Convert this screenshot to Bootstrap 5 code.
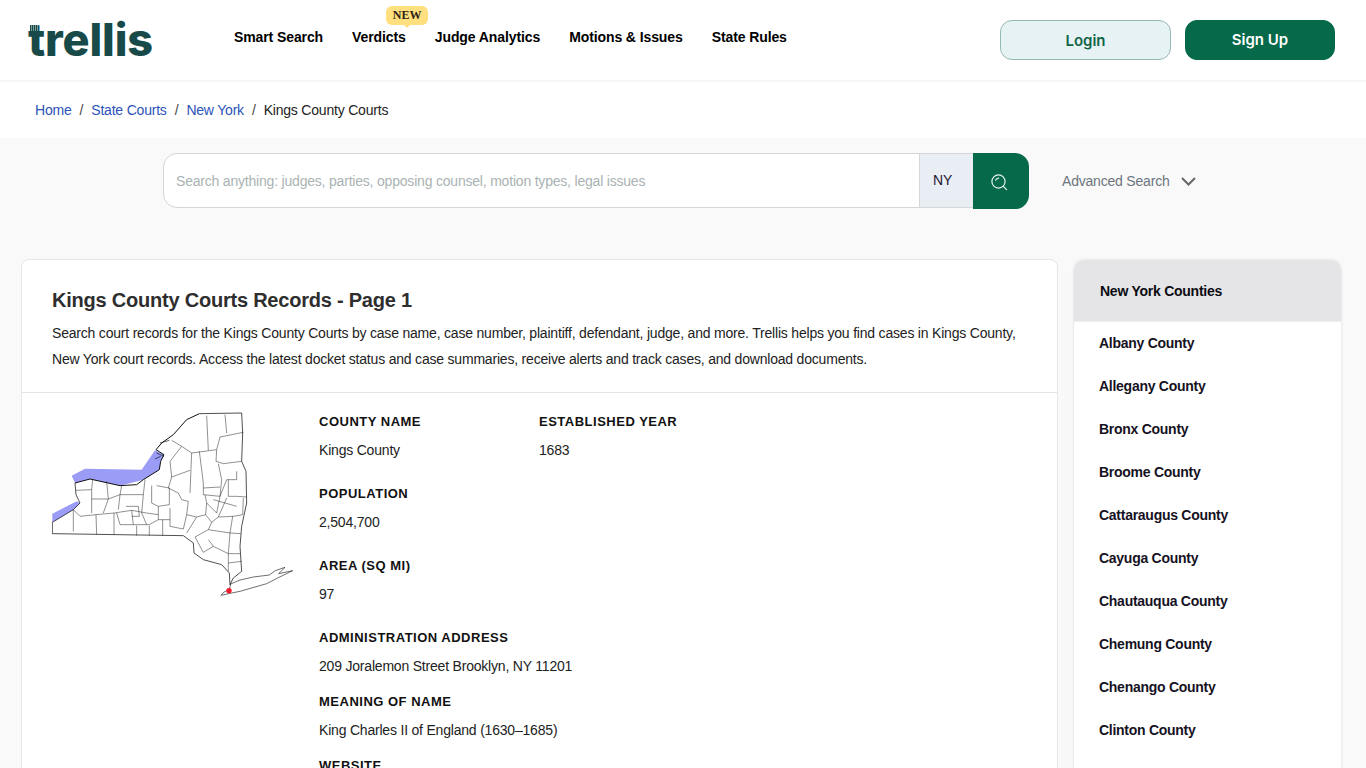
<!DOCTYPE html>
<html lang="en">
<head>
  <meta charset="UTF-8" />
  <meta name="viewport" content="width=device-width, initial-scale=1.0"/>
  <title>Kings County Courts - Trellis</title>
  <link href="https://cdn.jsdelivr.net/npm/bootstrap@5.3.0/dist/css/bootstrap.min.css" rel="stylesheet">
  <style>
    html, body { height: 768px; overflow: hidden; }
    body { font-family: "Liberation Sans", Arial, sans-serif; font-size: 14px; letter-spacing: -.2px; color: #1b1b22; background: #fff; }

    .top-bar { height: 82px; padding: 0 31px 0 28px; border-bottom: 2px solid #f4f5f6; align-items: flex-start; }
    .brand-logo { position: relative; width: 206px; height: 80px; margin: 0; padding: 0; font-family: Inter, sans-serif; font-weight: 800; font-size: 45px; line-height: 80px; letter-spacing: -.12px; color: #174a48; }
    .brand-tower { position: absolute; left: 2px; top: 25px; width: 8px; height: 6px; background: repeating-linear-gradient(90deg, #174a48 0 1px, #7d9a98 1px 2px); }
    .top-links { gap: 29px; margin-top: 27px; }
    .top-links .nav-link { padding: 0; position: relative; font-weight: 700; font-size: 14px; line-height: 21px; letter-spacing: -.1px; color: #000; }
    .new-tag { position: absolute; left: 34px; top: -21px; width: 42px; height: 19px; border-radius: 6px; background: #ffdf7e; color: #2b2412; font-family: "Liberation Serif", serif; font-size: 12px; line-height: 19px; text-align: center; letter-spacing: 0; }
    .new-tag::after { content: ""; position: absolute; left: 17px; bottom: -3px; border: 4px solid transparent; border-top-color: #ffdf7e; border-bottom: 0; }
    .btn-login, .btn-signup { height: 40px; margin-top: 20px; border-radius: 12px; font-family: Inter, sans-serif; font-weight: 600; font-size: 15px; letter-spacing: 0; padding: 0; }
    .btn-login { width: 171px; padding-top: 2px; background: #e7f2f5; border: 1px solid #95b9b5; color: #126447; }
    .btn-signup { width: 150px; margin-left: 14px; background: #05694a; border: 1px solid #05694a; color: #fff; }

    .crumb-row { height: 56px; padding: 0 35px; }
    .crumb-row .breadcrumb { font-size: 14px; --bs-breadcrumb-item-padding-x: 8px; --bs-breadcrumb-divider-color: #444; }
    .crumb-row a { color: #2b53b8; text-decoration: none; }
    .crumb-row .breadcrumb-item.active { color: #222; }

    .page-shade { background: #f9f9fa; padding-top: 15px; min-height: 640px; }
    .search-row { height: 56px; margin-left: 163px; }
    .search-group { width: 866px; height: 56px; }
    .search-group .form-control { height: 55px; border-radius: 14px 0 0 14px; border-color: #d3d7da; font-size: 14px; letter-spacing: -.2px; padding-left: 12px; box-shadow: none; }
    .search-group .form-control::placeholder { color: #aab3b3; }
    .state-tag { width: 55px; height: 55px; justify-content: flex-start; background: #e9eef5; border-color: #d3d7da; border-right: 0; border-radius: 0; color: #1c1530; font-size: 14px; padding: 0 0 0 13px; }
    .search-go { width: 56px; padding: 0 4px 0 0; background: #05694a; border: 0; border-radius: 0 14px 14px 0 !important; }
    .adv-search { margin-left: 33px; gap: 11px; color: #6c757d; font-size: 14px; }

    .content-row { padding: 50px 25px 0 21px; gap: 16px; align-items: flex-start; }
    .records-card { width: 1037px; flex: none; border-color: #e4e6e8; border-radius: 8px; }
    .records-head { padding: 28px 30px 20px; border-bottom: 1px solid #e4e6e8; }
    .records-head h1 { font-size: 20px; line-height: 24px; font-weight: 700; letter-spacing: -.22px; margin: 0 0 8px; color: #2e2e2e; }
    .records-head p { line-height: 26px; margin: 0; color: #222; }
    .records-body { padding: 18px 30px 0; }
    .map-col { width: 267px; flex: none; }
    .map-col svg { display: block; margin-top: 0; }
    .fact-col { width: 220px; flex: none; }
    .fact-title { font-weight: 700; font-size: 13px; line-height: 21px; letter-spacing: .5px; margin: 0 0 8px; color: #111; }
    .fact-value { line-height: 21px; margin: 0 0 22px; color: #222; }
    .fact-value.tight { margin-bottom: 14px; }

    .county-card { width: 267px; flex: none; margin-top: 1px; padding-bottom: 60px; border: 0; border-radius: 10px; overflow: hidden; box-shadow: 0 0 3px rgba(0,0,0,.14); }
    .county-head { height: 62px; padding: 0 26px; background: #e5e5e7; font-weight: 700; font-size: 14px; line-height: 62px; letter-spacing: -.25px; color: #0c0c12; border-bottom: 1px solid #eee; }
    .county-card .list-group-item { height: 43px; padding: 0 25px; border: 0; font-weight: 700; font-size: 14px; line-height: 43px; letter-spacing: -.27px; color: #16121f; }
  </style>
</head>
<body>

<!-- Top bar -->
<nav class="navbar top-bar d-flex flex-nowrap bg-white">
  <a class="navbar-brand brand-logo" href="#">trellis<span class="brand-tower"></span></a>
  <ul class="nav top-links flex-nowrap">
    <li class="nav-item"><a class="nav-link" href="#">Smart Search</a></li>
    <li class="nav-item"><a class="nav-link" href="#">Verdicts<span class="new-tag">NEW</span></a></li>
    <li class="nav-item"><a class="nav-link" href="#">Judge Analytics</a></li>
    <li class="nav-item"><a class="nav-link" href="#">Motions &amp; Issues</a></li>
    <li class="nav-item"><a class="nav-link" href="#">State Rules</a></li>
  </ul>
  <div class="ms-auto d-flex">
    <button class="btn btn-login" type="button">Login</button>
    <button class="btn btn-signup" type="button">Sign Up</button>
  </div>
</nav>

<!-- Breadcrumb -->
<div class="crumb-row d-flex align-items-center bg-white">
  <ol class="breadcrumb mb-0">
    <li class="breadcrumb-item"><a href="#">Home</a></li>
    <li class="breadcrumb-item"><a href="#">State Courts</a></li>
    <li class="breadcrumb-item"><a href="#">New York</a></li>
    <li class="breadcrumb-item active">Kings County Courts</li>
  </ol>
</div>

<div class="page-shade">
  <!-- Search -->
  <div class="search-row d-flex align-items-center">
    <div class="input-group search-group flex-nowrap align-items-start">
      <input type="text" class="form-control" placeholder="Search anything: judges, parties, opposing counsel, motion types, legal issues">
      <span class="input-group-text state-tag">NY</span>
      <button class="btn search-go align-self-stretch" type="button" aria-label="Search">
        <svg width="18" height="18" viewBox="0 0 18 18" fill="none" stroke="#e8f3ef" stroke-width="1.2" stroke-linecap="round">
          <circle cx="8.5" cy="8.5" r="6.6"/>
          <path d="M5.6 7.2a3.4 3.4 0 0 1 3-2"/>
          <path d="M13.4 13.4l3.2 3.2"/>
        </svg>
      </button>
    </div>
    <a class="adv-search d-flex align-items-center text-decoration-none" href="#">Advanced Search
      <svg width="15" height="9" viewBox="0 0 15 9" fill="none" stroke="#666" stroke-width="2"><path d="M1 1l6.5 6.5L14 1"/></svg>
    </a>
  </div>

  <div class="content-row d-flex">
    <!-- Records -->
    <div class="card records-card">
      <div class="records-head">
        <h1>Kings County Courts Records - Page 1</h1>
        <p>Search court records for the Kings County Courts by case name, case number, plaintiff, defendant, judge, and more. Trellis helps you find cases in Kings County, New York court records. Access the latest docket status and case summaries, receive alerts and track cases, and download documents.</p>
      </div>
      <div class="records-body d-flex">
        <div class="map-col">
          <svg width="243" height="190" viewBox="36 34 729 570">
            <path fill="#9a9cf5" d="M95 228L135 207L305 210L345 152L372 165L362 185L358 210L310 240L240 258L150 238L105 250ZM37 342L110 305L120 310L100 330L37 368Z"/>
            <path fill="none" stroke="#222" stroke-width="1.5" d="M395 122L425 140L455 160L530 150L540 112L610 98M500 48L505 152M555 45L560 100M478 155L490 250M455 160L450 280M425 140L390 185L395 232L450 212M530 150L528 185L550 192L605 185M535 192L545 240L540 290M395 232L385 265L415 280L425 300L445 305M490 250L490 285L540 290L560 240L590 240L590 215M590 290L620 292M540 290L530 340L500 310L495 285M445 305L440 345L470 352L497 345L500 310M535 352L580 350L608 345M497 345L515 368L535 352M515 368L505 390L570 400L578 350M505 390L465 412M505 420L520 440L490 458L465 412M520 440L565 462L570 400M570 400L602 402M565 462L600 462M565 490L605 485M565 462L565 515M100 330L100 395M168 345L170 405M222 340L222 405M290 378L290 408M328 378L328 408M368 360L368 408M390 325L390 380L430 388L440 345M355 320L355 360L390 360M100 330L120 350L168 345L222 340L275 332L280 375L328 375L355 360M108 272L155 270L158 240M155 270L155 340M155 298L205 298L200 245M205 298L190 340M205 298L240 285L245 258M240 285L235 330M240 285L310 285L315 240M310 285L305 340L320 375M258 320L295 320L298 350L275 350M335 258L335 310L355 320L388 315L388 265L350 258M320 340L355 345M490 265L540 262M520 300L590 320M565 240L565 290L590 290M535 352L560 295M608 345L610 295M470 352L440 400M230 340L240 375L280 375M275 332L320 340"/>
            <path fill="#fff" stroke="#111" stroke-width="1.8" d="M543 587L552 577L568 570L572 553L600 541L640 532L688 526L706 513L735 503L716 522L758 513L715 534L680 552L600 575L575 580Z"/>
            <path fill="none" stroke="#111" stroke-width="2.2" d="M478 42L605 40L608 100L605 185L618 215L620 310L605 380L600 440L605 515L580 535L570 555L568 520L545 495L490 480L462 460L460 430L430 408L37 402L37 368L100 330L120 310L108 285L105 250"/>
            <path fill="none" stroke="#111" stroke-width="3" d="M105 250L150 238L240 258L290 255L310 240L358 210L362 185L372 165L348 150L365 130L400 105L440 60L478 42"/>
            <path fill="none" stroke="#111" stroke-width="2" d="M345 178L362 170M350 160L372 170M360 130L388 122"/>
            <circle cx="567" cy="573" r="8" fill="#f01c2c"/>
          </svg>
        </div>
        <div class="fact-col">
          <p class="fact-title">COUNTY NAME</p>
          <p class="fact-value">Kings County</p>
          <p class="fact-title">POPULATION</p>
          <p class="fact-value">2,504,700</p>
          <p class="fact-title">AREA (SQ MI)</p>
          <p class="fact-value">97</p>
          <p class="fact-title text-nowrap">ADMINISTRATION ADDRESS</p>
          <p class="fact-value tight text-nowrap">209 Joralemon Street Brooklyn, NY 11201</p>
          <p class="fact-title">MEANING OF NAME</p>
          <p class="fact-value tight text-nowrap">King Charles II of England (1630–1685)</p>
          <p class="fact-title">WEBSITE</p>
        </div>
        <div class="fact-col">
          <p class="fact-title">ESTABLISHED YEAR</p>
          <p class="fact-value">1683</p>
        </div>
      </div>
    </div>

    <!-- Counties -->
    <div class="card county-card">
      <div class="county-head">New York Counties</div>
      <div class="list-group list-group-flush">
        <a class="list-group-item" href="#">Albany County</a>
        <a class="list-group-item" href="#">Allegany County</a>
        <a class="list-group-item" href="#">Bronx County</a>
        <a class="list-group-item" href="#">Broome County</a>
        <a class="list-group-item" href="#">Cattaraugus County</a>
        <a class="list-group-item" href="#">Cayuga County</a>
        <a class="list-group-item" href="#">Chautauqua County</a>
        <a class="list-group-item" href="#">Chemung County</a>
        <a class="list-group-item" href="#">Chenango County</a>
        <a class="list-group-item" href="#">Clinton County</a>
      </div>
    </div>
  </div>
</div>

<script src="https://cdn.jsdelivr.net/npm/bootstrap@5.3.0/dist/js/bootstrap.bundle.min.js"></script>
</body>
</html>
